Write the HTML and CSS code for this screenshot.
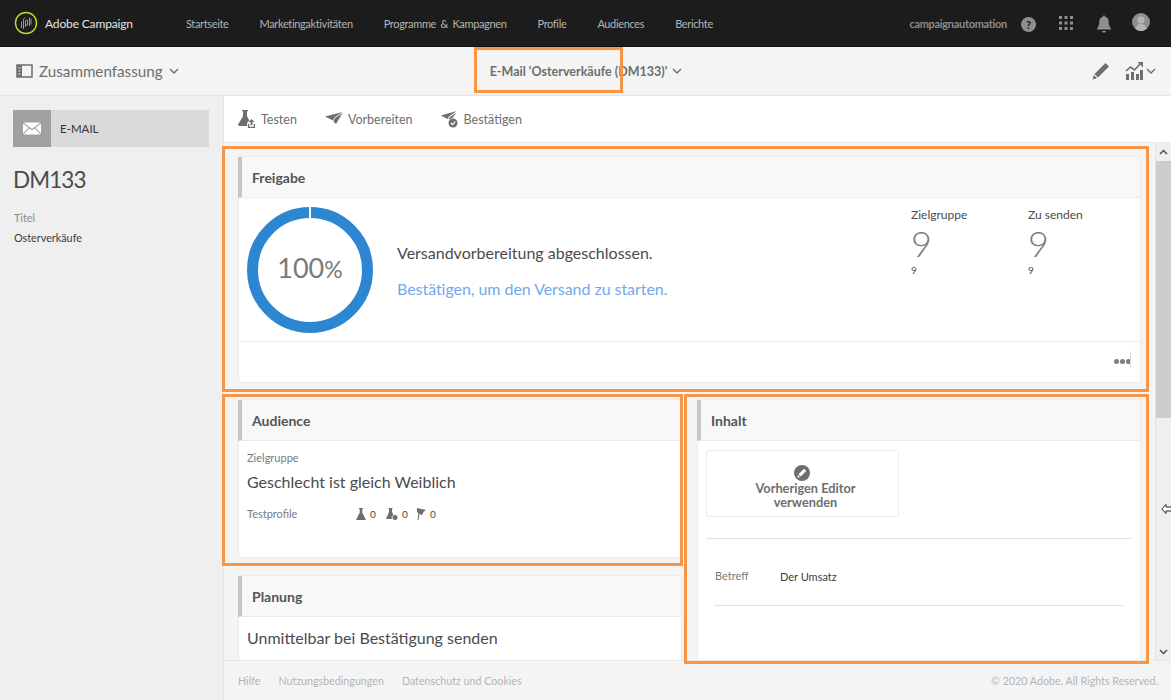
FILE: index.html
```html
<!DOCTYPE html>
<html lang="de">
<head>
    <meta charset="UTF-8">
    <title>Adobe Campaign</title>
    <link rel="stylesheet" href="styles.css">
</head>
<body>
    <header class="topbar">
        <div class="brand">
            <svg class="brand-logo" width="24" height="24" viewBox="0 0 24 24" fill="none">
                <circle cx="12" cy="12" r="10.5" stroke="#c4d82e" stroke-width="1.4"/>
                <path d="M7.5 17V10.5M9.5 18V8.5c0-1 .6-1.5 1.500-1.500M11.5 16V10c0-.7.4-1 1-1h1v5h-1.500M15.500 15V6.500M17 13.500V7.500" stroke="#9a9a8e" stroke-width="1"/>
            </svg>
            <span>Adobe Campaign</span>
        </div>
        <nav class="topnav">
            <a>Startseite</a>
            <a>Marketingaktivitäten</a>
            <a>Programme &amp; Kampagnen</a>
            <a>Profile</a>
            <a>Audiences</a>
            <a>Berichte</a>
        </nav>
        <div class="user">
            <span class="username">campaignautomation</span>
            <span class="help">?</span>
            <svg class="apps" width="16" height="16" viewBox="0 0 16 16" fill="#8e8e8e">
                <rect x="1" y="1" width="3" height="3"/><rect x="6.5" y="1" width="3" height="3"/><rect x="12" y="1" width="3" height="3"/>
                <rect x="1" y="6.5" width="3" height="3"/><rect x="6.5" y="6.5" width="3" height="3"/><rect x="12" y="6.5" width="3" height="3"/>
                <rect x="1" y="12" width="3" height="3"/><rect x="6.5" y="12" width="3" height="3"/><rect x="12" y="12" width="3" height="3"/>
            </svg>
            <svg class="bell" width="16" height="18" viewBox="0 0 16 18" fill="#8e8e8e">
                <path d="M8 .5c.8 0 1.300.6 1.300 1.300 2.300.6 3.400 2.500 3.400 5 0 3 .6 5 2.300 6.700v1H1v-1c1.700-1.700 2.300-3.700 2.300-6.700 0-2.500 1.100-4.400 3.400-5C6.700 1.100 7.200.5 8 .5zM6 16h4c0 1-.9 1.700-2 1.700S6 17 6 16z"/>
            </svg>
            <svg class="avatar" width="18" height="18" viewBox="0 0 18 18">
                <circle cx="9" cy="9" r="9" fill="#8e8e8e"/>
                <circle cx="9" cy="7" r="3.6" fill="#b5b5b5"/>
                <path d="M3.500 16c.6-3.500 2.800-5 5.500-5s4.900 1.500 5.500 5a9 9 0 0 1-11 0z" fill="#b5b5b5"/>
            </svg>
        </div>
    </header>

    <div class="subbar">
        <div class="subbar-left">
            <svg width="17" height="14" viewBox="0 0 17 14" fill="none" stroke="#6e6e6e">
                <rect x="1" y="1" width="15" height="12" stroke-width="1.5"/>
                <rect x="1" y="1" width="5" height="12" fill="#6e6e6e" stroke="none"/>
                <path d="M2.500 4h2M2.500 7h2M2.500 10h2" stroke="#f4f4f4"/>
            </svg>
            <span class="view-name">Zusammenfassung</span>
            <svg class="chev" width="10" height="6" viewBox="0 0 10 6"><path d="M1 1l4 4 4-4" /></svg>
        </div>
        <div class="subbar-title">
            <span>E-Mail 'Osterverkäufe (DM133)'</span>
            <svg class="chev" width="10" height="6" viewBox="0 0 10 6"><path d="M1 1l4 4 4-4" /></svg>
        </div>
        <div class="subbar-right">
            <svg width="18" height="18" viewBox="0 0 18 18" fill="#6e6e6e">
                <path d="M13.500 1l3.500 3.500L6 15.500 2.500 12zM1.800 13l3.200 3.200-4.400 1.200z"/>
            </svg>
            <svg class="chart" width="18" height="18" viewBox="0 0 18 18" fill="#6e6e6e">
                <path d="M1 12h3v6H1zM6 10h3v8H6zM11 12h3v6h-3zM15 8h3v10h-3z"/>
                <path d="M1 9l4.500-4 4 3 6-6.500" fill="none" stroke="#6e6e6e" stroke-width="1.6"/>
                <path d="M12.500 0H18v5.500z"/>
            </svg>
            <svg class="chev" width="10" height="6" viewBox="0 0 10 6"><path d="M1 1l4 4 4-4" /></svg>
        </div>
    </div>

    <div class="layout">
        <aside class="sidebar">
            <div class="type-tile">
                <span class="type-icon">
                    <svg width="18" height="13" viewBox="0 0 18 13" fill="#fff">
                        <path d="M.5 .5h17L9 7zM0 1.500l5.500 4.300L0 11.500zM18 1.500v10l-5.500-5.700zM6.300 6.500L9 8.500l2.700-2 5.800 6H.5z"/>
                    </svg>
                </span>
                <span class="type-label">E-MAIL</span>
            </div>
            <h1 class="code">DM133</h1>
            <div class="side-label">Titel</div>
            <div class="side-value">Osterverkäufe</div>
        </aside>

        <main class="main">
            <div class="toolbar">
                <a class="tool">
                    <svg width="18" height="18" viewBox="0 0 18 18" fill="#6e6e6e">
                        <path d="M4 0h6v1.200H9v5l2.300 4.300a4.500 4.500 0 0 0-1.800 5.500H1.500C.3 16-.3 15 .3 14L5 6.200v-5H4z"/>
                        <path d="M13.500 9l3 3h-2v3h-2v-3h-2zM10 14h1.300v2.700h4.400V14H17v4h-7z"/>
                    </svg>
                    Testen
                </a>
                <a class="tool">
                    <svg width="18" height="14" viewBox="0 0 18 14" fill="#6e6e6e">
                        <path d="M0 4.500L17.500 0 9.500 5.500 8 8.500zM17.500 1L11 12 8.500 9.500 10 6z"/>
                    </svg>
                    Vorbereiten
                </a>
                <a class="tool">
                    <svg width="18" height="18" viewBox="0 0 18 18" fill="#6e6e6e">
                        <path d="M0 5.500L15.500 1 8 6.500 6.500 9zM15.500 2.500L11.500 8a5 5 0 0 0-3 1.500L7.500 8.500 9 7z"/>
                        <circle cx="12" cy="13" r="4.5"/>
                        <path d="M9.800 13l1.700 1.600 2.800-3" fill="none" stroke="#fff" stroke-width="1.2"/>
                    </svg>
                    Bestätigen
                </a>
            </div>

            <div class="content">
                <div class="scroll-area">
                    <section class="card card-approval">
                        <h2 class="card-title">Freigabe</h2>
                        <div class="approval-body">
                            <svg class="donut" width="126" height="126" viewBox="0 0 126 126">
                                <circle cx="63" cy="63" r="57.5" fill="none" stroke="#2d86d2" stroke-width="11"/>
                                <rect x="62" y="0" width="2" height="12" fill="#fff"/>
                                <text x="63" y="71" text-anchor="middle" class="donut-text">100<tspan class="donut-pct">%</tspan></text>
                            </svg>
                            <div class="approval-msg">
                                <p class="approval-status">Versandvorbereitung abgeschlossen.</p>
                                <p class="approval-link">Bestätigen, um den Versand zu starten.</p>
                            </div>
                            <div class="kpis">
                                <div class="kpi">
                                    <div class="kpi-label">Zielgruppe</div>
                                    <div class="kpi-num">9</div>
                                    <div class="kpi-sub">9</div>
                                </div>
                                <div class="kpi">
                                    <div class="kpi-label">Zu senden</div>
                                    <div class="kpi-num">9</div>
                                    <div class="kpi-sub">9</div>
                                </div>
                            </div>
                        </div>
                        <div class="approval-foot"><span class="dots"><i></i><i></i><i></i></span></div>
                    </section>

                    <div class="card-cols">
                        <div class="col">
                            <section class="card card-audience">
                                <h2 class="card-title">Audience</h2>
                                <div class="audience-body">
                                    <div class="field-label">Zielgruppe</div>
                                    <div class="big-text">Geschlecht ist gleich Weiblich</div>
                                    <div class="test-row">
                                        <span class="field-label test-label">Testprofile</span>
                                        <span class="counter">
                                            <svg width="10" height="12" viewBox="0 0 10 12" fill="#6e6e6e"><path d="M3 0h4v1H6.300v3.500L10 12H0l3.700-7.500V1H3z"/></svg>0
                                        </span>
                                        <span class="counter">
                                            <svg width="12" height="12" viewBox="0 0 12 12" fill="#6e6e6e"><path d="M2.500 0h4v1H6v3l1.500 3a3 3 0 0 0-1.500 4H0l3-7V1h-.5z"/><circle cx="9" cy="9.500" r="2.500"/></svg>0
                                        </span>
                                        <span class="counter">
                                            <svg width="10" height="12" viewBox="0 0 10 12" fill="#6e6e6e"><path d="M1 0l9 2-2.500 2L6 7 3.500 6 2.500 12H1.500L2.500 5.500 1 4z"/></svg>0
                                        </span>
                                    </div>
                                </div>
                            </section>
                            <section class="card card-planning">
                                <h2 class="card-title">Planung</h2>
                                <div class="big-text planning-text">Unmittelbar bei Bestätigung senden</div>
                            </section>
                        </div>
                        <div class="col">
                            <section class="card card-content">
                                <h2 class="card-title">Inhalt</h2>
                                <div class="content-body">
                                    <button class="editor-btn">
                                        <span class="pencil-badge">
                                            <svg width="10" height="10" viewBox="0 0 10 10" fill="#fff"><path d="M7 .8l2.200 2.200-5.500 5.500L1.500 6.300zM1 7l2 2-2.700.7z"/></svg>
                                        </span>
                                        Vorherigen Editor<br>verwenden
                                    </button>
                                    <hr class="rule">
                                    <div class="subject-row">
                                        <span class="field-label subject-label">Betreff</span>
                                        <span class="subject-value">Der Umsatz</span>
                                    </div>
                                    <hr class="rule rule-short">
                                </div>
                            </section>
                        </div>
                    </div>
                </div>
                <div class="scrollbar">
                    <svg class="arrow" width="9" height="6" viewBox="0 0 9 6"><path d="M1 5l3.500-3.500L8 5"/></svg>
                    <div class="thumb"></div>
                    <svg class="arrow" width="9" height="6" viewBox="0 0 9 6"><path d="M1 1l3.500 3.500L8 1"/></svg>
                </div>
            </div>

            <footer class="footer">
                <a>Hilfe</a>
                <a>Nutzungsbedingungen</a>
                <a>Datenschutz und Cookies</a>
                <span class="copyright">© 2020 Adobe. All Rights Reserved.</span>
            </footer>
        </main>
    </div>

    <!-- orange callouts drawn on top of the screen -->
    <div class="callout callout-title"></div>
    <div class="callout callout-approval"></div>
    <div class="callout callout-audience"></div>
    <div class="callout callout-content"></div>

    <svg class="cursor" width="12" height="10" viewBox="0 0 12 10"><path d="M5 .5L.8 5 5 9.500V7h6.500V3H5z" fill="#fff" stroke="#222"/></svg>
</body>
</html>
```

FILE: styles.css
```css
* {
    box-sizing: border-box;
}

html, body {
    height: 100%;
}

body {
    margin: 0;
    height: 700px;
    overflow: hidden;
    position: relative;
    display: flex;
    flex-direction: column;
    font-family: 'Lato', 'Open Sans', sans-serif;
    color: #4b4b4b;
    background: #efefef;
}

/* top bar */
.topbar {
    height: 47px;
    flex: none;
    display: flex;
    align-items: center;
    background: #1c1c1c;
    color: #b4b4b4;
    border-bottom: 1px solid #111;
    padding-left: 14px;
}

.brand {
    width: 172px;
    flex: none;
    display: flex;
    align-items: center;
    gap: 7px;
    color: #e4e4e4;
    font-size: 12px;
    letter-spacing: -0.15px;
}

.topnav {
    display: flex;
    gap: 31px;
    font-size: 11px;
    letter-spacing: -0.35px;
    word-spacing: 2px;
}

.user {
    margin-left: auto;
    display: flex;
    align-items: center;
    padding-right: 21px;
}

.username {
    font-size: 11px;
    font-weight: 700;
    letter-spacing: -0.3px;
    color: #8b8b8b;
    margin-right: 14px;
}

.help {
    width: 15px;
    height: 15px;
    border-radius: 50%;
    background: #8e8e8e;
    color: #1c1c1c;
    font-size: 11px;
    font-weight: 900;
    line-height: 15px;
    text-align: center;
    margin-right: 22px;
    margin-top: 2px;
}

.apps {
    margin-right: 22px;
}

.bell {
    margin-right: 20px;
    margin-top: 2px;
}

.avatar {
    margin-top: -3px;
}

/* second bar */
.subbar {
    height: 49px;
    flex: none;
    display: grid;
    grid-template-columns: 1fr auto 1fr;
    align-items: center;
    padding: 0 15px 0 16px;
    background: #f4f4f4;
    border-bottom: 1px solid #e4e4e4;
    color: #6e6e6e;
}

.subbar-left {
    display: flex;
    align-items: center;
    gap: 6px;
}

.view-name {
    font-size: 15.2px;
}

.subbar-title {
    display: flex;
    align-items: center;
    gap: 5px;
    font-size: 12.5px;
    font-weight: 700;
}

.subbar-right {
    display: flex;
    align-items: center;
    justify-content: flex-end;
}

.subbar-right .chart {
    margin-left: 15px;
    margin-right: 3px;
}

.chev path {
    fill: none;
    stroke: #6e6e6e;
    stroke-width: 1.4;
}

/* body */
.layout {
    flex: 1;
    min-height: 0;
    display: flex;
}

.sidebar {
    width: 224px;
    flex: none;
    padding: 14px 14px 0 13px;
    background: #efefef;
    border-right: 1px solid #e6e6e6;
}

.type-tile {
    height: 37px;
    display: flex;
    align-items: center;
    background: #d9d9d9;
    color: #333;
    font-size: 11.5px;
}

.type-icon {
    width: 38px;
    height: 37px;
    display: flex;
    align-items: center;
    justify-content: center;
    background: #a0a0a0;
    margin-right: 9px;
}

.code {
    margin: 17px 0 15px;
    font-size: 22.5px;
    font-weight: 400;
    letter-spacing: -0.9px;
    line-height: 32px;
    color: #4b4b4b;
}

.side-label {
    margin-left: 1px;
    font-size: 10.8px;
    color: #8a8a8a;
    margin-bottom: 7px;
}

.side-value {
    margin-left: 1px;
    font-size: 10.8px;
    color: #3c3c3c;
}

.main {
    flex: 1;
    min-width: 0;
    display: flex;
    flex-direction: column;
    background: #f4f4f4;
}

.toolbar {
    height: 47px;
    flex: none;
    display: flex;
    align-items: center;
    gap: 28px;
    padding-left: 14px;
    background: #fff;
    border-bottom: 1px solid #e8e8e8;
}

.tool {
    display: flex;
    align-items: center;
    gap: 5px;
    font-size: 12.5px;
    color: #6e6e6e;
}

.content {
    flex: 1;
    min-height: 0;
    display: flex;
}

.scroll-area {
    flex: 1;
    min-width: 0;
    overflow: hidden;
    padding: 13px 14px 0 14px;
    background: #f4f4f4;
}

.scrollbar {
    width: 16px;
    flex: none;
    display: flex;
    flex-direction: column;
    align-items: center;
    background: #efefef;
    border-left: 1px solid #e6e6e6;
    padding: 6px 0 5px;
}

.thumb {
    width: 100%;
    height: 257px;
    margin: 6px 0 auto;
    background: #cdcdcd;
}

.arrow path {
    fill: none;
    stroke: #505050;
    stroke-width: 1.5;
}

/* cards */
.card {
    background: #fff;
    border: 1px solid #ececec;
    border-radius: 2px;
}

.card-title {
    margin: 0 0 0 -1px;
    height: 41px;
    padding-left: 10px;
    font-size: 14px;
    font-weight: 700;
    line-height: 41px;
    color: #555;
    background: #f8f8f8;
    border-left: 4px solid #c6c6c6;
    border-bottom: 1px solid #ececec;
}

.card-approval {
    height: 227px;
}

.approval-body {
    height: 144px;
    display: flex;
    align-items: flex-start;
    padding: 9px 0 0 8px;
    border-bottom: 1px solid #ececec;
}

.donut {
    flex: none;
}

.donut-text {
    font-size: 27px;
    fill: #7a7a7a;
}

.donut-pct {
    font-size: 23px;
}

.approval-msg {
    flex: none;
    margin: 35px 0 0 24px;
    width: 514px;
}

.approval-msg p {
    margin: 0;
    font-size: 16px;
    line-height: 22px;
}

.approval-status {
    color: #4b4b4b;
}

.approval-msg .approval-link {
    margin-top: 14px;
    color: #71a9ee;
    letter-spacing: -0.05px;
}

.kpis {
    display: flex;
}

.kpi {
    width: 117px;
    color: #4b4b4b;
}

.kpi:last-child {
    width: 100px;
}

.kpi-label {
    font-size: 12px;
    line-height: 15px;
}

.kpi-num {
    font-size: 36px;
    font-weight: 300;
    line-height: 42px;
    color: #7a7a7a;
}

.kpi-sub {
    font-size: 10px;
    line-height: 12px;
}

.approval-foot {
    height: 41px;
    display: flex;
    justify-content: flex-end;
    padding: 17px 9px 0 0;
}

.dots {
    display: flex;
    gap: 1px;
    height: 5px;
    position: relative;
}

/* stray repaint line left over the dots in the capture */
.dots::after {
    content: "";
    position: absolute;
    right: 0;
    top: -8px;
    width: 1px;
    height: 17px;
    background: #dcdcdc;
}

.dots i {
    width: 5px;
    height: 5px;
    border-radius: 50%;
    background: #7d7d7d;
}

.card-cols {
    display: flex;
    gap: 15px;
    margin-top: 16px;
}

.col {
    flex: 1;
    min-width: 0;
    display: flex;
    flex-direction: column;
    gap: 17px;
}

.card-audience {
    height: 159px;
}

.audience-body {
    padding: 10px 8px 0;
}

.field-label {
    font-size: 11px;
    line-height: 14px;
    color: #7a7a7a;
}

.big-text {
    font-size: 16px;
    line-height: 22px;
    color: #4b4b4b;
}

.audience-body .big-text {
    margin-top: 6px;
}

.test-row {
    display: flex;
    align-items: center;
    margin-top: 14px;
}

.test-label {
    width: 109px;
}

.counter {
    width: 30px;
    display: flex;
    align-items: center;
    gap: 4px;
    font-size: 10px;
    color: #4b4b4b;
}

.planning-text {
    padding: 10px 8px 0;
}

.card-planning {
    height: 120px;
}

.card-content {
    height: 300px;
}

.content-body {
    padding: 9px 9px 0 8px;
}

.editor-btn {
    display: block;
    width: 193px;
    height: 67px;
    padding: 7px 0 0 6px;
    border: 1px solid #ececec;
    border-radius: 2px;
    background: #fff;
    font: 700 12.75px/14px 'Lato', sans-serif;
    color: #6e6e6e;
    text-align: center;
}

.pencil-badge {
    display: flex;
    align-items: center;
    justify-content: center;
    width: 16px;
    height: 16px;
    margin-left: 81px;
    border-radius: 50%;
    background: #6e6e6e;
}

.rule {
    margin: 21px 0 0;
    border: none;
    border-top: 1px solid #e2e2e2;
}

.subject-row {
    display: flex;
    align-items: center;
    height: 66px;
    padding: 8px 0 0 9px;
}

.subject-label {
    width: 65px;
}

.subject-value {
    font-size: 11px;
    color: #3c3c3c;
}

.rule-short {
    margin: 0 8px 0 8px;
}

/* footer */
.footer {
    height: 40px;
    flex: none;
    display: flex;
    align-items: center;
    gap: 18px;
    padding: 0 13px 0 14px;
    font-size: 10.7px;
    color: #b5b5b5;
    background: #f4f4f4;
    border-top: 1px solid #e8e8e8;
}

.copyright {
    margin-left: auto;
}

/* overlays */
.callout {
    position: absolute;
    border: 3px solid #f79646;
    pointer-events: none;
}

.callout-title {
    left: 474px;
    top: 47px;
    width: 149px;
    height: 46px;
}

.callout-approval {
    left: 222px;
    top: 146px;
    width: 927px;
    height: 246px;
}

.callout-audience {
    left: 222px;
    top: 394px;
    width: 461px;
    height: 172px;
}

.callout-content {
    left: 684px;
    top: 394px;
    width: 465px;
    height: 270px;
}

.cursor {
    position: absolute;
    left: 1161px;
    top: 504px;
}
```
